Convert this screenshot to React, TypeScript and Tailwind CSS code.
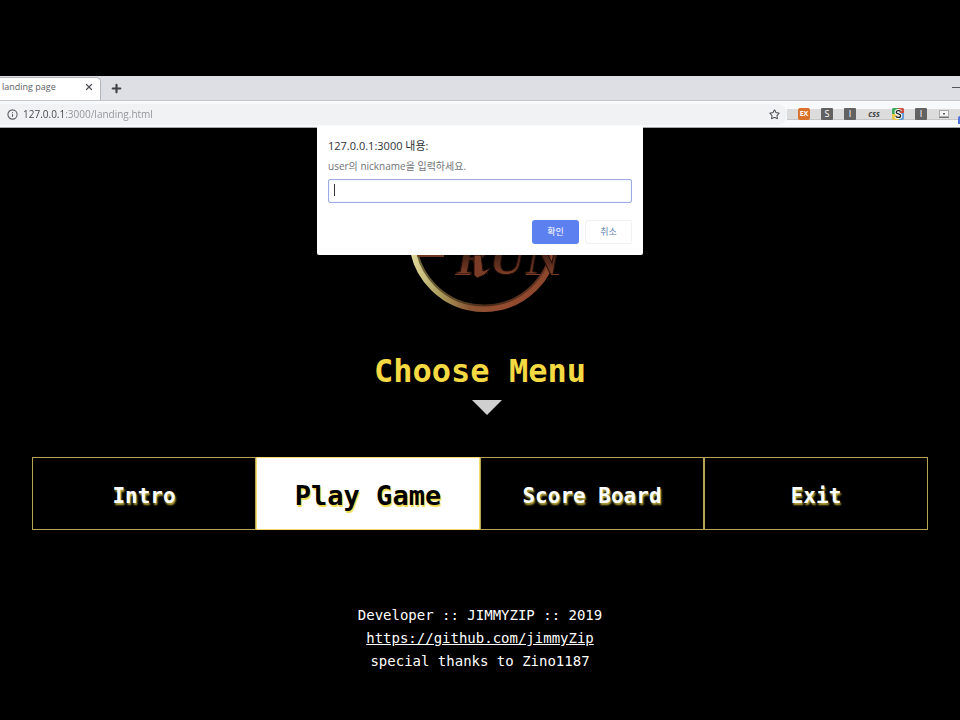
import React from "react";
import { Plus, Star, X, Info } from "lucide-react";

const menuItems = ["Intro", "Play Game", "Score Board", "Exit"];

function Extensions() {
  return (
    <div className="flex h-[11px] w-[173px] shrink-0 items-center border-b border-[#c6c6c6] bg-[#dcdcdc] pl-[11px]">
      <div className="flex shrink-0 items-center gap-[11px] text-[7px] leading-3 font-bold text-white">
        <button aria-label="EX" className="h-3 w-3 rounded-[2px] bg-[#d9732c]">
          EX
        </button>
        <button aria-label="S" className="h-3 w-3 rounded-[1px] bg-[#626262] text-[9px] font-normal">
          S
        </button>
        <button aria-label="I" className="h-3 w-3 rounded-[1px] bg-[#626262] text-[9px] font-normal">
          I
        </button>
        <button className="w-3.5 text-[8px] text-[#444] italic">css</button>
        <button aria-label="S search" className="h-3 w-3">
          <svg viewBox="0 0 12 12" className="h-3 w-3">
            <rect width="12" height="12" rx="2" fill="#5b9bd8" />
            <path d="M0 2a2 2 0 0 1 2-2h5L5 6H0z" fill="#43a95c" />
            <path d="M6 0h4a2 2 0 0 1 2 2v3H8z" fill="#d54b3d" />
            <path d="M0 6h5l2 6H2a2 2 0 0 1-2-2z" fill="#e8c84a" />
            <path d="M8.600 3.400C7.900 2.300 4.200 2.100 4.200 4.200c0 2 4.400 1.300 4.400 3.500 0 2.200-4 2-4.800.6" fill="none" stroke="#fff" strokeWidth="3.400" />
            <path d="M8.600 3.400C7.900 2.300 4.200 2.100 4.200 4.200c0 2 4.400 1.300 4.400 3.500 0 2.200-4 2-4.800.6" fill="none" stroke="#222" strokeWidth="1.400" />
          </svg>
        </button>
        <button aria-label="I" className="h-3 w-3 rounded-[1px] bg-[#626262] text-[9px] font-normal">
          I
        </button>
        <button aria-label="Screen capture" className="h-3 w-3">
          <svg viewBox="0 0 12 12" className="h-3 w-3" fill="none">
            <rect x="1.500" y="2.500" width="9" height="6" fill="#f5f5f5" stroke="#aaa" />
            <rect x="5" y="5" width="2" height="1.500" fill="#555" />
            <path d="M1 9.500h10" stroke="#777" />
          </svg>
        </button>
      </div>
      <span className="mt-3 ml-2 h-2 w-2 shrink-0 rounded-tl-[2px] bg-[#4f73df]" />
    </div>
  );
}

function BrowserBar() {
  return (
    <header className="font-['Open_Sans','Noto_Sans_CJK_KR',sans-serif]">
      <div className="flex h-6 items-end bg-[#dedfe5]">
        <div className="flex h-[23px] w-[101px] items-center justify-between rounded-tr-[5px] border-t border-r border-[#b4b5ba] bg-white pr-1.5 pb-1 pl-0.5">
          <span className="text-[9px] text-[#606266]">landing page</span>
          <button aria-label="Close tab">
            <X size={10} color="#505357" strokeWidth={3} />
          </button>
        </div>
        <button aria-label="New tab" className="mb-[5px] ml-[9px]">
          <Plus size={13} color="#404246" strokeWidth={4} />
        </button>
        <button aria-label="Minimize" className="mb-3 ml-auto h-px w-2 bg-[#55575b]" />
      </div>
      <div className="flex h-7 items-center overflow-hidden border-t border-b border-t-[#c4c6ca] border-b-[#a5a7aa] bg-[#f8f9fa]">
        <div className="flex h-[21px] grow items-center rounded-r-full bg-[#f1f2f4] pr-[7px] pl-[7px]">
          <Info size={11} color="#5c5f63" strokeWidth={2.4} />
          <input
            aria-label="Address"
            defaultValue="127.0.0.1:3000/landing.html"
            className="ml-[5px] h-4 min-w-0 grow bg-[linear-gradient(to_right,#404246_43px,#8e9196_43px)] bg-clip-text text-[10px] leading-4 text-transparent outline-none"
          />
          <button aria-label="Bookmark">
            <Star size={11} color="#4b4e52" strokeWidth={2.2} />
          </button>
        </div>
        <Extensions />
      </div>
    </header>
  );
}

function Logo() {
  return (
    <svg viewBox="0 0 164 160" className="ml-2 h-40 w-[164px]" role="img" aria-label="Run">
      <defs>
        <linearGradient id="ring" x1="0" y1="0" x2="1" y2="0">
          <stop offset="0" stopColor="#e0d898" />
          <stop offset="0.200" stopColor="#a99a5c" />
          <stop offset="0.400" stopColor="#8a5434" />
          <stop offset="0.600" stopColor="#964c30" />
          <stop offset="1" stopColor="#8a452c" />
        </linearGradient>
        <linearGradient id="ringEdge" x1="0" y1="0" x2="1" y2="0">
          <stop offset="0" stopColor="#6d6537" />
          <stop offset="0.500" stopColor="#4a2c1a" />
          <stop offset="1" stopColor="#6b3422" />
        </linearGradient>
        <linearGradient id="letters" x1="0" y1="0" x2="0" y2="1">
          <stop offset="0.400" stopColor="#3a1c13" />
          <stop offset="0.800" stopColor="#7a3c27" />
        </linearGradient>
      </defs>
      <circle cx="82" cy="82" r="71.500" fill="none" stroke="url(#ring)" strokeWidth="7" />
      <circle cx="82" cy="82" r="68.500" fill="none" stroke="url(#ringEdge)" strokeWidth="2" />
      <path d="M14 98h28v4H16z" fill="#6d3620" />
      <text
        x="54"
        y="119"
        fontFamily="Liberation Serif, serif"
        fontSize="50"
        fontWeight="bold"
        fontStyle="italic"
        fill="url(#letters)"
        stroke="#1c0c08"
        strokeWidth="1"
      >
        RUN
      </text>
      <path d="M72 100h7l2 16 8-3-7 7-7 3-3-3z" fill="#7a3c27" stroke="#1c0c08" strokeWidth="1" />
      <path d="M53 119.500h15M124 119.500h14M149 119.500h8" fill="none" stroke="#7a3c27" />
    </svg>
  );
}

function PromptDialog() {
  return (
    <form
      role="dialog"
      aria-label="127.0.0.1:3000 내용:"
      onSubmit={(e) => e.preventDefault()}
      className="absolute top-[126px] left-1/2 w-[326px] -translate-x-1/2 rounded-b-[2px] bg-white px-[11px] pt-3 pb-[11px] font-['Open_Sans','Noto_Sans_CJK_KR',sans-serif]"
    >
      <h2 className="text-[11px] leading-4 text-[#303236]">127.0.0.1:3000 내용:</h2>
      <label htmlFor="nickname" className="mt-1 block text-[10px] leading-4 text-[#717377]">
        user의 nickname을 입력하세요.
      </label>
      <div className="relative mt-[5px]">
        <input
          id="nickname"
          type="text"
          className="block h-6 w-full rounded-[2px] border border-[#9dabe2] bg-white px-1 text-[10px] shadow-[inset_0_0_1px_#9dabe2] outline-none"
        />
        <span aria-hidden="true" className="absolute top-[5px] left-1.5 h-3 w-px bg-[#333]" />
      </div>
      <div className="mt-[17px] flex justify-end gap-1.5 text-[9px]">
        <button type="submit" className="h-6 w-[47px] rounded-[3px] bg-[#5c80ef] text-white">
          확인
        </button>
        <button type="button" className="h-6 w-[47px] rounded-[3px] border border-[#eef0f2] text-[#6681b0]">
          취소
        </button>
      </div>
    </form>
  );
}

export default function App() {
  return (
    <div className="relative min-h-screen bg-black pt-[76px] font-['DejaVu_Sans_Mono',monospace] text-white">
      <BrowserBar />
      <main className="flex flex-col items-center px-8 pt-[27px]">
        <Logo />
        <h1 className="mt-9 text-[32px] leading-10 font-bold text-[#f5d942]">Choose Menu</h1>
        <svg viewBox="0 0 30 15" className="mt-[9px] ml-3.5 h-[15px] w-[30px]" aria-hidden="true">
          <path d="M0 0h30L15 15z" fill="#cfcfcf" />
        </svg>
        <nav className="mt-[42px] grid w-full grid-cols-4">
          {menuItems.map((item) => (
            <button
              key={item}
              className={
                item === "Play Game"
                  ? "h-[73px] border border-[#f3dc6b] bg-white pt-1.5 text-[27px] font-bold text-black [text-shadow:1px_2px_1px_#f0dc50]"
                  : "h-[73px] border border-[#b5a453] pt-1.5 text-[21px] font-bold text-white [text-shadow:1px_2px_2px_#c0b040]"
              }
            >
              {item}
            </button>
          ))}
        </nav>
      </main>
      <footer className="mt-[74px] pb-11 text-center text-[14px] leading-[23px]">
        <p>Developer :: JIMMYZIP :: 2019</p>
        <p>
          <a href="https://github.com/jimmyZip" className="underline">
            https://github.com/jimmyZip
          </a>
        </p>
        <p>special thanks to Zino1187</p>
      </footer>
      <PromptDialog />
    </div>
  );
}
